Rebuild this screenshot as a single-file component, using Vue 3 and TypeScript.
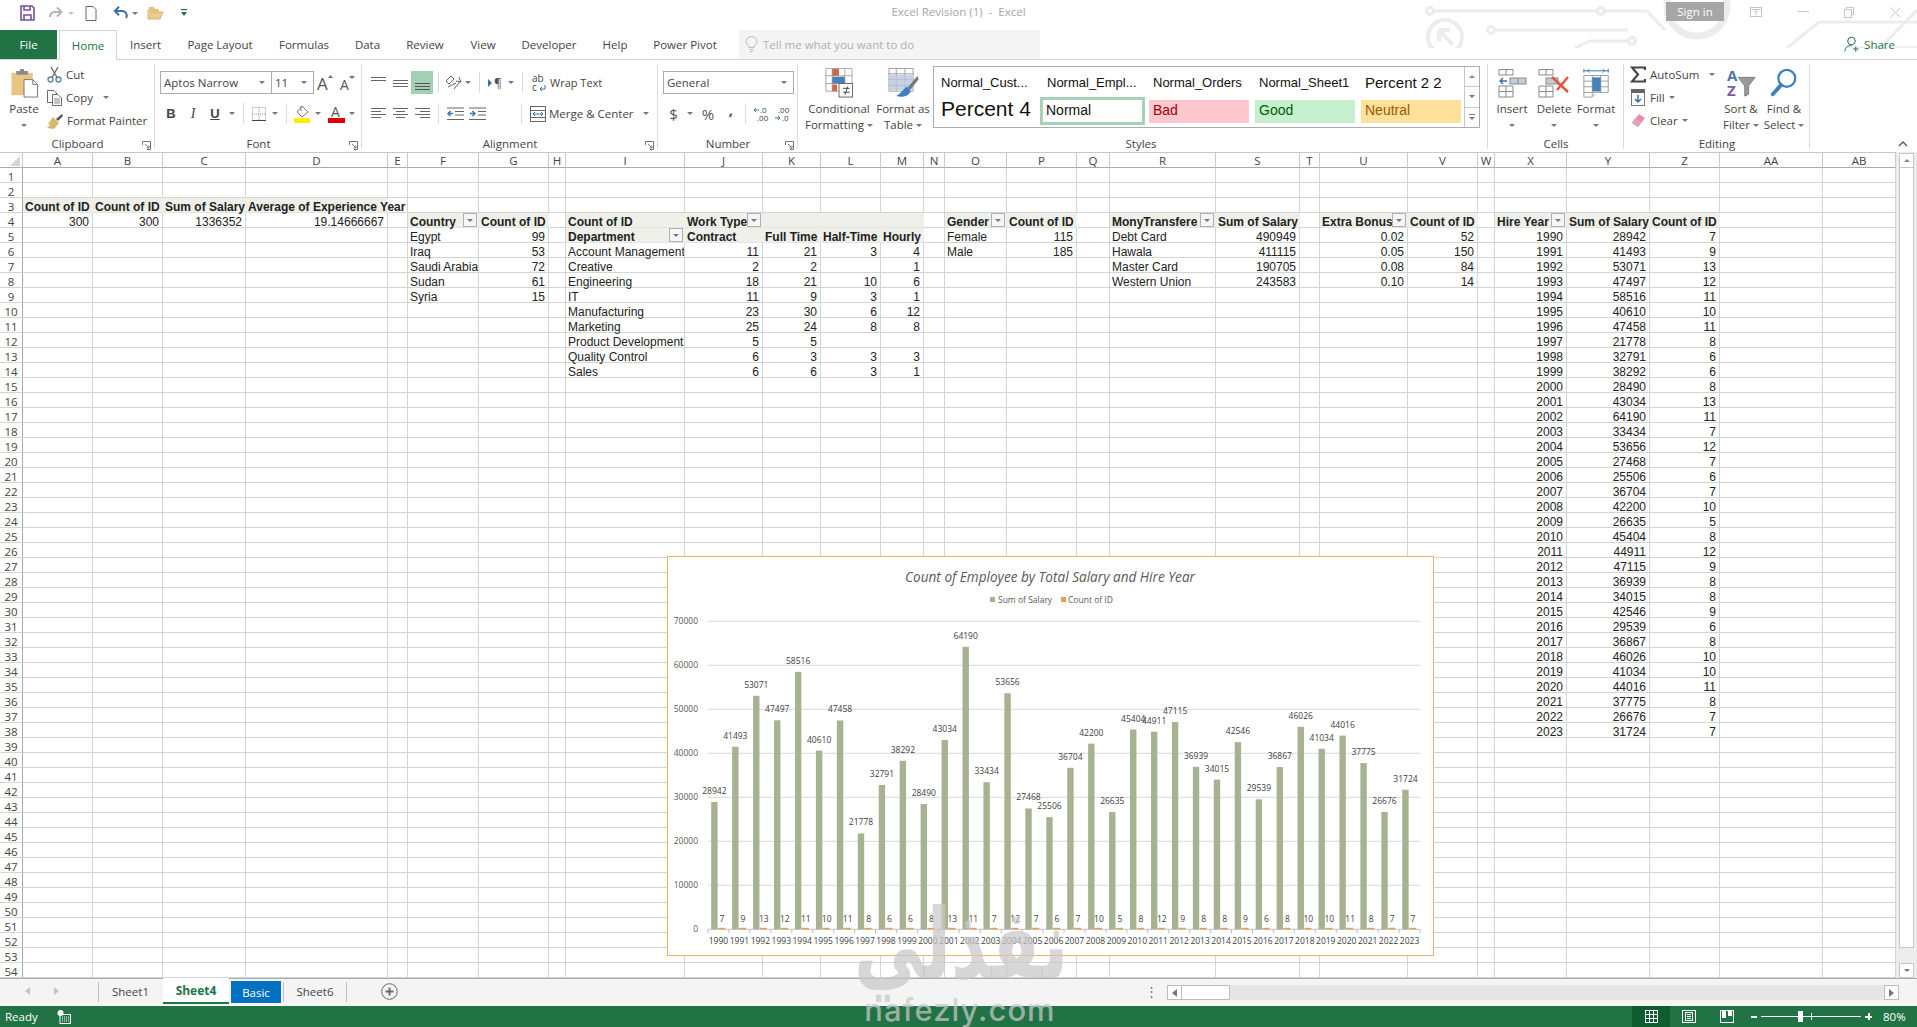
<script setup lang="ts">
type Cell = { t: string; c: string; f?: boolean }

const letters = ['A','B','C','D','E','F','G','H','I','J','K','L','M','N','O','P','Q','R','S','T','U','V','W','X','Y','Z','AA','AB']
const rows = Array.from({ length: 54 }, (_, i) => i + 1)
const store: Record<string, Cell> = {}
const put = (col: string, row: number, t: string, c = '', f = false) => { store[col + row] = { t, c, f } }

const hdr = (col: string, row: number, t: string, f = false) => put(col, row, t, 'hd fill', f)
hdr('A', 3, 'Count of ID'); hdr('B', 3, 'Count of ID'); hdr('C', 3, 'Sum of Salary')
put('D', 3, 'Average of Experience Year', 'hd fill over')
put('A', 4, '300', 'n'); put('B', 4, '300', 'n'); put('C', 4, '1336352', 'n'); put('D', 4, '19.14666667', 'n')

hdr('F', 4, 'Country', true); hdr('G', 4, 'Count of ID')
;[['Egypt', 99], ['Iraq', 53], ['Saudi Arabia', 72], ['Sudan', 61], ['Syria', 15]].forEach((r, i) => {
  put('F', 5 + i, String(r[0])); put('G', 5 + i, String(r[1]), 'n')
})

hdr('I', 4, 'Count of ID'); hdr('J', 4, 'Work Type', true); hdr('K', 4, ''); hdr('L', 4, ''); hdr('M', 4, '')
hdr('I', 5, 'Department', true); hdr('J', 5, 'Contract'); hdr('K', 5, 'Full Time'); hdr('L', 5, 'Half-Time'); hdr('M', 5, 'Hourly')
const dept: [string, string, string, string, string][] = [
  ['Account Management', '11', '21', '3', '4'], ['Creative', '2', '2', '', '1'], ['Engineering', '18', '21', '10', '6'],
  ['IT', '11', '9', '3', '1'], ['Manufacturing', '23', '30', '6', '12'], ['Marketing', '25', '24', '8', '8'],
  ['Product Development', '5', '5', '', ''], ['Quality Control', '6', '3', '3', '3'], ['Sales', '6', '6', '3', '1']
]
dept.forEach((r, i) => {
  put('I', 6 + i, r[0]); put('J', 6 + i, r[1], 'n'); put('K', 6 + i, r[2], 'n'); put('L', 6 + i, r[3], 'n'); put('M', 6 + i, r[4], 'n')
})

hdr('O', 4, 'Gender', true); hdr('P', 4, 'Count of ID')
put('O', 5, 'Female'); put('P', 5, '115', 'n'); put('O', 6, 'Male'); put('P', 6, '185', 'n')

hdr('R', 4, 'MonyTransfere', true); hdr('S', 4, 'Sum of Salary')
;[['Debt Card', '490949'], ['Hawala', '411115'], ['Master Card', '190705'], ['Western Union', '243583']].forEach((r, i) => {
  put('R', 5 + i, r[0]); put('S', 5 + i, r[1], 'n')
})

hdr('U', 4, 'Extra Bonus', true); hdr('V', 4, 'Count of ID')
;[['0.02', '52'], ['0.05', '150'], ['0.08', '84'], ['0.10', '14']].forEach((r, i) => {
  put('U', 5 + i, r[0], 'n'); put('V', 5 + i, r[1], 'n')
})

const years: [number, number][] = [
  [28942,7],[41493,9],[53071,13],[47497,12],[58516,11],[40610,10],[47458,11],[21778,8],[32791,6],[38292,6],
  [28490,8],[43034,13],[64190,11],[33434,7],[53656,12],[27468,7],[25506,6],[36704,7],[42200,10],[26635,5],
  [45404,8],[44911,12],[47115,9],[36939,8],[34015,8],[42546,9],[29539,6],[36867,8],[46026,10],[41034,10],
  [44016,11],[37775,8],[26676,7],[31724,7]
]
hdr('X', 4, 'Hire Year', true); hdr('Y', 4, 'Sum of Salary'); hdr('Z', 4, 'Count of ID')
years.forEach((r, i) => {
  put('X', 5 + i, String(1990 + i), 'n'); put('Y', 5 + i, String(r[0]), 'n'); put('Z', 5 + i, String(r[1]), 'n')
})

const cell = (col: string, row: number): Cell => store[col + row] || { t: '', c: '' }

const x0 = 40, y0 = 372.3, step = 712 / 34, perK = 44 / 10000
const ticks = [0, 1, 2, 3, 4, 5, 6, 7].map(i => ({ v: i * 10000, y: y0 - i * 44 }))
const bars = years.map((r, i) => {
  const x = x0 + i * step + 3.2
  const h = r[0] * perK
  return { i, x, y: y0 - h, h, v: r[0], c: r[1], cx: x + 3.2, ox: x + 6.9, lx: x + 10.8, year: 1990 + i, mid: x0 + i * step + step / 2, tick: x0 + i * step }
})
</script>

<template>
  <div class="app">
    <svg class="circuit" width="492" height="48" viewBox="0 0 492 48" fill="none" stroke="#ececec" stroke-width="3">
      <circle cx="5" cy="11" r="3.5" /><path d="M9 11H172" /><circle cx="176" cy="11" r="3.5" />
      <path d="M180 11H222L240 30" />
      <circle cx="20" cy="37" r="17" stroke-width="4" /><path d="M28 45L14 30M14 30V41M14 30H25" stroke-width="4" />
      <circle cx="66" cy="30" r="3.5" /><path d="M70 30H203" /><circle cx="207" cy="41" r="3.5" />
      <path d="M203 41H165L150 48" />
      <circle cx="272" cy="6" r="30" stroke-width="7" />
      <path d="M362 48L394 22H492" /><path d="M455 48L492 10" /><path d="M420 48H492" />
    </svg>

    <header class="titlebar">
      <div class="qat">
        <svg class="q1" width="15" height="16" viewBox="0 0 15 16" fill="none" stroke="#7a4f9f" stroke-width="1.6"><path d="M1 1H12L14 3V15H1Z" /><path d="M4 1V5H10V1M4 15V10H11V15" /></svg>
        <svg class="q2" width="16" height="14" viewBox="0 0 16 14" fill="none" stroke="#b5b5b5" stroke-width="2"><path d="M14 6H7A4.5 4.5 0 0 0 3 11" /><path d="M10 1.5L14.500 6L10 10.500" /></svg>
        <span class="car lt q3"></span>
        <svg class="q4" width="12" height="15" viewBox="0 0 12 15" fill="#fff" stroke="#666"><path d="M1 .5H8L11 3.500V14.500H1Z" /></svg>
        <svg class="q5" width="16" height="14" viewBox="0 0 16 14" fill="none" stroke="#3b6fa8" stroke-width="2"><path d="M2 5H9A4.500 4.500 0 0 1 13 12" /><path d="M6 .8L1.800 5L6 9.200" /></svg>
        <span class="car q6"></span>
        <svg class="q7" width="17" height="14" viewBox="0 0 17 14"><path d="M1 3V13H13L16 6H5L2 13" fill="#eccb8f" stroke="#d9b36d" /><path d="M2 3V1H7L8 3H12V6H4L2 12Z" fill="#e7c07c" /></svg>
        <svg class="q8" width="8" height="9" viewBox="0 0 8 9" fill="#217346"><rect x="1" y="0" width="6" height="1.200" /><path d="M1 3H7L4 7Z" /></svg>
      </div>
      <div class="doc-title">Excel Revision (1)&nbsp; -&nbsp; Excel</div>
      <div class="win">
        <span class="signin">Sign in</span>
        <svg class="w1" width="12" height="10" viewBox="0 0 12 10" fill="none" stroke="#c6c6c6"><rect x=".5" y=".5" width="11" height="9" /><path d="M.5 2.500H11.500M6 8.500V4M4 5.500L6 3.500L8 5.500" /></svg>
        <svg class="w2" width="11" height="2" viewBox="0 0 11 2"><rect width="11" height="1" fill="#c6c6c6" /></svg>
        <svg class="w3" width="10" height="11" viewBox="0 0 10 11" fill="#fff" stroke="#c6c6c6"><path d="M2.500 2.500V.5H9.500V7.500H7.500" /><rect x=".5" y="2.500" width="7" height="8" /></svg>
        <svg class="w4" width="11" height="11" viewBox="0 0 11 11" stroke="#c6c6c6" fill="none"><path d="M.5 .5L10.500 10.500M10.500 .5L.5 10.500" /></svg>
      </div>
    </header>

    <nav class="tabs">
      <div class="tab file">File</div>
      <div class="tab home">Home</div>
      <div class="tab">Insert</div>
      <div class="tab">Page Layout</div>
      <div class="tab">Formulas</div>
      <div class="tab">Data</div>
      <div class="tab">Review</div>
      <div class="tab">View</div>
      <div class="tab">Developer</div>
      <div class="tab">Help</div>
      <div class="tab">Power Pivot</div>
      <div class="tell">
        <svg width="13" height="17" viewBox="0 0 13 17" fill="none" stroke="#bdbdbd"><path d="M4 11.500C4 9 1 8.500 1 5.500A5.500 5 0 0 1 12 5.500C12 8.500 9 9 9 11.500ZM4.500 13.500H8.500M5 15.500H8" /></svg>
        <span>Tell me what you want to do</span>
      </div>
      <div class="share">
        <svg width="15" height="17" viewBox="0 0 15 17" fill="none" stroke="#217346"><circle cx="7.500" cy="5" r="3.800" /><path d="M.8 15.500C1.500 11 4 9.500 7.500 9.500M9 13H14.500M11.800 10.500V15.800" /></svg>
        <span>Share</span>
      </div>
    </nav>

    <section class="ribbon">
      <!-- Clipboard -->
      <div class="group g-clip">
        <div class="body flex-row">
          <div class="big paste">
            <svg width="31" height="31" viewBox="0 0 31 31"><path d="M2 5H24V28H2Z" fill="#e8c582" /><path d="M7 3H11V1H15V3H19V7H7Z" fill="#8a8a8a" /><path d="M15 12H24L29 17V30H15Z" fill="#fff" stroke="#777" /><path d="M24 12V17H29" fill="none" stroke="#777" /></svg>
            <span class="bl">Paste</span>
            <span class="bl"><i class="car"></i></span>
          </div>
          <div class="smalls s-clip">
            <div class="srow"><svg width="15" height="17" viewBox="0 0 15 17" fill="none" stroke="#5e7f9f" stroke-width="1.300"><circle cx="3.500" cy="13.500" r="2.500" /><circle cx="11.500" cy="13.500" r="2.500" /><path d="M5 11.500L11 1M10 11.500L4 1" stroke="#666" /></svg><span>Cut</span></div>
            <div class="srow"><svg width="15" height="16" viewBox="0 0 15 16" fill="#fff" stroke="#6b6b6b"><path d="M.5 .5H7L9.500 3V12.500H.5Z" /><path d="M5.500 4.500H11L14.500 8V15.500H5.500Z" /><path d="M7 9H13M7 11H13M7 13H13" stroke="#8a8a8a" /></svg><span>Copy</span><i class="car copy-car"></i></div>
            <div class="srow"><svg width="16" height="16" viewBox="0 0 16 16"><path d="M9 6L15 1L16 3L11 8Z" fill="#555" /><path d="M6 4L12 10L7 16L0 15L3 12L1 11Z" fill="#d9b56e" /></svg><span>Format Painter</span></div>
          </div>
        </div>
        <div class="glabel">Clipboard<svg class="launch" width="9" height="9" viewBox="0 0 9 9" fill="none" stroke="#777"><path d="M.5 4V.5H8.500V8.500H5M3 3L7 7M7 4.500V7H4.500" /></svg></div>
      </div>

      <!-- Font -->
      <div class="group g-font">
        <div class="body rows2">
          <div class="row">
            <div class="combo font-name"><span>Aptos Narrow</span><i class="car"></i></div>
            <div class="combo font-size"><span>11</span><i class="car"></i></div>
            <div class="b w22 grow-a"><svg width="18" height="18" viewBox="0 0 18 18"><text x="0" y="16" class="glyph-a">A</text><path d="M11 4L13.500 1L16 4Z" fill="#4b78aa" /></svg></div>
            <div class="b w22"><svg width="16" height="16" viewBox="0 0 16 16"><text x="0" y="15" class="glyph-a2">A</text><path d="M9 1H15L12 4Z" fill="#4b78aa" /></svg></div>
          </div>
          <div class="row r-font2">
            <div class="b w22 tb">B</div>
            <div class="b w22 ti">I</div>
            <div class="b w22 tu">U</div>
            <div class="b w12"><i class="car"></i></div>
            <div class="sep"></div>
            <div class="b w20"><svg width="14" height="14" viewBox="0 0 14 14" fill="none" stroke="#9a9a9a" stroke-dasharray="1 1"><rect x=".5" y=".5" width="13" height="13" /><path d="M7 0V14M0 7H14" /><path d="M0 13.500H14" stroke="#444" stroke-dasharray="none" /></svg></div>
            <div class="b w12"><i class="car"></i></div>
            <div class="sep"></div>
            <div class="b w20"><svg width="17" height="18" viewBox="0 0 17 18"><path d="M8 1L14 7L8 12L3 7Z" fill="#fff" stroke="#777" /><path d="M7 1V6" stroke="#777" /><rect x="0" y="13" width="16" height="5" fill="#ffee00" /></svg></div>
            <div class="b w12"><i class="car"></i></div>
            <div class="sep sp0"></div>
            <div class="b w20"><svg width="17" height="18" viewBox="0 0 17 18"><text x="3" y="12" class="glyph-c">A</text><rect x="0" y="13" width="17" height="5" fill="#e00000" /></svg></div>
            <div class="b w12"><i class="car"></i></div>
          </div>
        </div>
        <div class="glabel">Font<svg class="launch" width="9" height="9" viewBox="0 0 9 9" fill="none" stroke="#777"><path d="M.5 4V.5H8.500V8.500H5M3 3L7 7M7 4.500V7H4.500" /></svg></div>
      </div>

      <!-- Alignment -->
      <div class="group g-align">
        <div class="body rows2">
          <div class="row">
            <div class="b w22"><svg width="15" height="16" viewBox="0 0 15 16" stroke="#666"><path d="M0 2.500H15M0 5.500H15" /></svg></div>
            <div class="b w22"><svg width="15" height="16" viewBox="0 0 15 16" stroke="#666"><path d="M0 5.500H15M0 8.500H15M0 11.500H15" /></svg></div>
            <div class="b w22 on"><svg width="15" height="16" viewBox="0 0 15 16" stroke="#555"><path d="M0 8.500H15M0 11.500H15M0 14.500H15" /></svg></div>
            <div class="sep"></div>
            <div class="b w18"><svg width="17" height="17" viewBox="0 0 17 17" fill="none" stroke="#666"><path d="M1 7L6 2L9 5L4 10ZM3 13L11 9M14 3L16 8L11 7M15.500 7L9 15" /></svg></div>
            <div class="b w12"><i class="car"></i></div>
            <div class="sep"></div>
            <div class="b w20"><svg width="14" height="12" viewBox="0 0 14 12"><path d="M0 2L4 6L0 10Z" fill="#3b6fa8" /><text x="6" y="11" class="glyph-p">¶</text></svg></div>
            <div class="b w12"><i class="car"></i></div>
            <div class="sep s4"></div>
            <div class="b w22"><svg width="15" height="18" viewBox="0 0 15 18"><text x="0" y="8" class="glyph-w">ab</text><text x="0" y="17" class="glyph-w">c</text><path d="M13 11V15H8M10 13L8 15L10 17" fill="none" stroke="#3b6fa8" /></svg></div>
            <span class="rtext wrap">Wrap Text</span>
          </div>
          <div class="row">
            <div class="b w22"><svg width="15" height="14" viewBox="0 0 15 14" stroke="#666"><path d="M0 1.500H15M0 4.500H10M0 7.500H15M0 10.500H10" /></svg></div>
            <div class="b w22"><svg width="15" height="14" viewBox="0 0 15 14" stroke="#666"><path d="M0 1.500H15M3 4.500H12M0 7.500H15M3 10.500H12" /></svg></div>
            <div class="b w22"><svg width="15" height="14" viewBox="0 0 15 14" stroke="#666"><path d="M0 1.500H15M5 4.500H15M0 7.500H15M5 10.500H15" /></svg></div>
            <div class="sep"></div>
            <div class="b w22"><svg width="17" height="14" viewBox="0 0 17 14" fill="none"><path d="M0 1H17M8 4.500H17M8 8H17M0 12.500H17" stroke="#666" /><path d="M6 6.500H1M3.500 4L1 6.500L3.500 9" stroke="#3b6fa8" stroke-width="1.400" /></svg></div>
            <div class="b w22"><svg width="17" height="14" viewBox="0 0 17 14" fill="none"><path d="M0 1H17M9 4.500H17M9 8H17M0 12.500H17" stroke="#666" /><path d="M1 6.500H6M3.500 4L6 6.500L3.500 9" stroke="#3b6fa8" stroke-width="1.400" /></svg></div>
            <div class="spacer31"></div>
            <div class="sep"></div>
            <div class="b w22"><svg width="16" height="16" viewBox="0 0 16 16" fill="none" stroke="#666"><rect x=".5" y=".5" width="15" height="15" /><path d="M0 4.500H16M0 11.500H16" /><path d="M3 8H13M5 6L3 8L5 10M11 6L13 8L11 10" stroke="#3b6fa8" /></svg></div>
            <span class="rtext merge">Merge &amp; Center</span>
            <i class="car"></i>
          </div>
        </div>
        <div class="glabel">Alignment<svg class="launch" width="9" height="9" viewBox="0 0 9 9" fill="none" stroke="#777"><path d="M.5 4V.5H8.500V8.500H5M3 3L7 7M7 4.500V7H4.500" /></svg></div>
      </div>

      <!-- Number -->
      <div class="group g-num">
        <div class="body rows2">
          <div class="row"><div class="combo num-combo"><span>General</span><i class="car"></i></div></div>
          <div class="row">
            <div class="b w21 tn">$</div>
            <div class="b w12"><i class="car"></i></div>
            <div class="b w24 tn">%</div>
            <div class="b w18 tn tc">,</div>
            <div class="sep"></div>
            <div class="b w20"><svg width="15" height="16" viewBox="0 0 15 16"><path d="M5 4H0M2 2L0 4L2 6" stroke="#3b6fa8" fill="none" /><text x="6" y="7" class="glyph-n">.0</text><text x="3" y="15" class="glyph-n">.00</text></svg></div>
            <div class="b w22"><svg width="15" height="16" viewBox="0 0 15 16"><text x="3" y="7" class="glyph-n">.00</text><path d="M0 12H5M3 10L5 12L3 14" stroke="#3b6fa8" fill="none" /><text x="7" y="15" class="glyph-n">.0</text></svg></div>
          </div>
        </div>
        <div class="glabel">Number<svg class="launch" width="9" height="9" viewBox="0 0 9 9" fill="none" stroke="#777"><path d="M.5 4V.5H8.500V8.500H5M3 3L7 7M7 4.500V7H4.500" /></svg></div>
      </div>

      <!-- Styles -->
      <div class="group g-styles">
        <div class="body flex-row">
          <div class="big cf">
            <svg width="29" height="31" viewBox="0 0 29 31" fill="none"><path d="M.5 .5H27.500V24H.5ZM7 0V24M20 0V24M0 8H28M0 16H28" stroke="#a8a8a8" /><rect x="7" y="1" width="7" height="7" fill="#c96a4c" /><rect x="7" y="9" width="13" height="7" fill="#4a80b8" /><rect x="7" y="17" width="5" height="7" fill="#c96a4c" /><rect x="14" y="16" width="14" height="14" fill="#fff" stroke="#666" /><path d="M18 21H25M18 25H25M23 19L20 28" stroke="#444" /></svg>
            <span class="bl">Conditional</span>
            <span class="bl">Formatting<i class="car mini"></i></span>
          </div>
          <div class="big fat">
            <svg width="31" height="31" viewBox="0 0 31 31" fill="none"><path d="M.5 .5H25.500V24H.5ZM8 0V24M17 0V24M0 6H26M0 12H26M0 18H26" stroke="#a0a0a0" /><rect x="1" y="7" width="24" height="16" fill="#b9c7dd" opacity=".8" /><path d="M30 8L20 20L22 23L31 12Z" fill="#777" /><path d="M19 19C15 22 14 25 8 29C14 31 21 29 23 24Z" fill="#3f7fc1" /></svg>
            <span class="bl">Format as</span>
            <span class="bl">Table<i class="car mini"></i></span>
          </div>
          <div class="gallery">
            <div class="gal-grid">
              <div class="gi">Normal_Cust...</div>
              <div class="gi">Normal_Empl...</div>
              <div class="gi">Normal_Orders</div>
              <div class="gi">Normal_Sheet1</div>
              <div class="gi pct22">Percent 2 2</div>
              <div class="gi pct4">Percent 4</div>
              <div class="gbox normal">Normal</div>
              <div class="gbox bad">Bad</div>
              <div class="gbox good">Good</div>
              <div class="gbox neutral">Neutral</div>
            </div>
            <div class="gal-scroll">
              <div class="gs"><i class="car up lt"></i></div>
              <div class="gs"><i class="car"></i></div>
              <div class="gs more"><span></span><i class="car"></i></div>
            </div>
          </div>
        </div>
        <div class="glabel lbl-styles">Styles</div>
      </div>

      <!-- Cells -->
      <div class="group g-cells">
        <div class="body flex-row">
          <div class="big cb">
            <svg width="29" height="30" viewBox="0 0 29 30" fill="none" stroke="#8a8a8a"><path d="M1 1.500H15V7H1ZM8 1.500V7M1 18H15V29H1ZM8 18V29M1 23.500H15" /><rect x="12" y="10" width="16" height="6" fill="#c3cdd9" /><path d="M20 10V16" /><path d="M9 13H2M5 10L2 13L5 16" stroke="#3b6fa8" stroke-width="1.400" /></svg>
            <span class="bl">Insert</span>
            <span class="bl"><i class="car"></i></span>
          </div>
          <div class="big cb">
            <svg width="32" height="30" viewBox="0 0 32 30" fill="none" stroke="#8a8a8a"><path d="M1 1.500H15V7H1ZM8 1.500V7M1 18H15V29H1ZM8 18V29M1 23.500H15" /><rect x="8" y="10" width="12" height="6" fill="#c3cdd9" /><path d="M14 9L30 24M30 9L19 22" stroke="#e0553b" stroke-width="2.400" /></svg>
            <span class="bl">Delete</span>
            <span class="bl"><i class="car"></i></span>
          </div>
          <div class="big cb">
            <svg width="29" height="32" viewBox="0 0 29 32" fill="none" stroke="#9a9a9a"><path d="M1 3H27M1 1V5M27 1V5M5 3L7 1M5 3L7 5M23 3L21 1M23 3L21 5" stroke="#3b6fa8" /><path d="M1 8H27V26H1ZM10 8V30M19 8V26M1 14H27M1 20H27" /><rect x="10" y="10" width="9" height="15" fill="#4a80b8" stroke="none" /><path d="M1 26V31H10L13 28" /></svg>
            <span class="bl">Format</span>
            <span class="bl"><i class="car"></i></span>
          </div>
        </div>
        <div class="glabel">Cells</div>
      </div>

      <!-- Editing -->
      <div class="group g-edit">
        <div class="body flex-row">
          <div class="smalls s-edit">
            <div class="srow"><svg width="16" height="17" viewBox="0 0 16 17" fill="none" stroke="#444" stroke-width="2.200"><path d="M15 4V1.500H2L8 8.500L2 15.500H15V13" /></svg><span>AutoSum</span><i class="car auto-car"></i></div>
            <div class="srow"><svg width="14" height="17" viewBox="0 0 14 17" fill="#fff" stroke="#777"><rect x=".5" y=".5" width="13" height="16" /><rect x="0" y="0" width="14" height="4" fill="#666" stroke="none" /><path d="M7 6V13M4 10L7 13L10 10" stroke="#3b6fa8" stroke-width="1.500" fill="none" /></svg><span>Fill</span><i class="car fill-car"></i></div>
            <div class="srow"><svg width="14" height="15" viewBox="0 0 14 15"><path d="M8 1L14 5L7 14L1 10Z" fill="#e88ea8" /><path d="M1 10L4 5L10 9L7 14Z" fill="#e4a0b4" /></svg><span>Clear</span><i class="car fill-car"></i></div>
          </div>
          <div class="big sf">
            <svg width="31" height="32" viewBox="0 0 31 32"><text x="0" y="14" class="az a">A</text><text x="0" y="30" class="az z">Z</text><path d="M12 10H30L23 19V28L19 30V19Z" fill="#9a9a9a" stroke="#777" /></svg>
            <span class="bl">Sort &amp;</span>
            <span class="bl">Filter<i class="car mini"></i></span>
          </div>
          <div class="big fs">
            <svg width="28" height="32" viewBox="0 0 28 32" fill="none" stroke="#3f7fc1"><circle cx="17" cy="11" r="9" stroke-width="2.400" /><path d="M11 18L2 28" stroke-width="4" stroke-linecap="round" /></svg>
            <span class="bl">Find &amp;</span>
            <span class="bl">Select<i class="car mini"></i></span>
          </div>
        </div>
        <div class="glabel">Editing</div>
      </div>

      <div class="collapse-wrap">
        <svg width="10" height="7" viewBox="0 0 10 7" fill="none" stroke="#555" stroke-width="1.400"><path d="M1 6L5 2L9 6" /></svg>
      </div>
    </section>

    <main class="sheet">
      <div class="grid">
        <div class="corner"><svg width="10" height="10" viewBox="0 0 10 10"><path d="M10 0V10H0Z" fill="#d4d4d4" /></svg></div>
        <div v-for="l in letters" :key="l" class="colh">{{ l }}</div>
        <template v-for="r in rows" :key="r">
          <div class="rowh">{{ r }}</div>
          <div v-for="l in letters" :key="l" class="cell" :class="cell(l, r).c">
            <span class="ct">{{ cell(l, r).t }}</span>
            <span v-if="cell(l, r).f" class="flt"><i class="car dk"></i></span>
          </div>
        </template>

        <div class="chart">
          <svg width="765" height="398" viewBox="0 0 765 398">
            <text x="382" y="25" text-anchor="middle" class="ch-title">Count of Employee by Total Salary and Hire Year</text>
            <rect x="322" y="40" width="5" height="5" fill="#a7b293" />
            <text x="330" y="46" class="ch-leg">Sum of Salary</text>
            <rect x="393" y="40" width="5" height="5" fill="#e3a04f" />
            <text x="400" y="46" class="ch-leg">Count of ID</text>
            <g v-for="t in ticks" :key="t.v">
              <line v-if="t.v" :x1="x0" :x2="752" :y1="t.y" :y2="t.y" stroke="#d9d9d9" />
              <text x="30" :y="t.y + 3" text-anchor="end" class="ch-lab">{{ t.v }}</text>
            </g>
            <line :x1="x0" x2="752" :y1="y0" :y2="y0" stroke="#bfbfbf" />
            <g v-for="b in bars" :key="b.i">
              <line :x1="b.tick" :x2="b.tick" :y1="y0" :y2="y0 + 4" stroke="#bfbfbf" />
              <rect :x="b.x" :y="b.y" width="6.400" :height="b.h" fill="#a7b293" />
              <rect :x="b.ox" :y="y0 - 1.500" width="7" height="1.500" fill="#e3a04f" />
              <text :x="b.cx" :y="b.y - 8" text-anchor="middle" class="ch-val">{{ b.v }}</text>
              <text :x="b.lx" :y="y0 - 7" text-anchor="middle" class="ch-val">{{ b.c }}</text>
              <text :x="b.mid" :y="y0 + 15" text-anchor="middle" class="ch-val">{{ b.year }}</text>
            </g>
            <line x1="752" x2="752" :y1="y0" :y2="y0 + 4" stroke="#bfbfbf" />
          </svg>
        </div>
      </div>
      <div class="vscroll">
        <div class="vbtn"><i class="car up lt"></i></div>
        <div class="vthumb"></div>
        <div class="vbtn down"><i class="car"></i></div>
      </div>
    </main>

    <div class="sheetbar">
      <div class="nav"><i class="tri-l"></i><i class="tri-r"></i></div>
      <div class="stab first">Sheet1</div>
      <div class="stab active">Sheet4</div>
      <div class="stab blue">Basic</div>
      <div class="stab last">Sheet6</div>
      <svg class="plus" width="17" height="17" viewBox="0 0 17 17" fill="none" stroke="#666"><circle cx="8.500" cy="8.500" r="7.800" /><path d="M8.500 4.500V12.500M4.500 8.500H12.500" stroke-width="1.800" /></svg>
      <div class="dots">⋮</div>
      <div class="hscroll">
        <div class="hbtn"><i class="tri-l dk2"></i></div>
        <div class="hthumb"></div>
        <div class="htrack"></div>
        <div class="hbtn"><i class="tri-r dk2"></i></div>
      </div>
    </div>

    <footer class="status">
      <span class="ready">Ready</span>
      <svg class="macro" width="14" height="14" viewBox="0 0 14 14" fill="none" stroke="#fff"><rect x="3" y="4.500" width="10.500" height="9" /><path d="M5 7H12M5 9H12M5 11H12" stroke-dasharray="1 1" /><circle cx="3.500" cy="3" r="3" fill="#fff" stroke="none" /></svg>
      <div class="views">
        <div class="view cur"><svg width="13" height="13" viewBox="0 0 13 13" fill="none" stroke="#fff"><rect x=".5" y=".5" width="12" height="12" /><path d="M4.500 0V13M8.500 0V13M0 4.500H13M0 8.500H13" /></svg></div>
        <div class="view"><svg width="14" height="13" viewBox="0 0 14 13" fill="none" stroke="#fff"><rect x=".5" y=".5" width="13" height="12" /><rect x="3.500" y="2.500" width="7" height="8" /><path d="M5 4.500H9M5 6.500H9M5 8.500H9" /></svg></div>
        <div class="view"><svg width="14" height="13" viewBox="0 0 14 13" fill="none" stroke="#fff"><rect x=".5" y=".5" width="13" height="12" /><path d="M2 1H6V8H2ZM8 1H12V6H8Z" fill="#fff" stroke="none" /></svg></div>
      </div>
      <div class="zoom">
        <span class="z-minus"></span>
        <div class="z-track"><span class="z-tick"></span><span class="z-thumb"></span></div>
        <span class="z-plus"></span>
        <span class="z-val">80%</span>
      </div>
    </footer>

    <div class="watermark">
      <div class="wm-ar">نفذلي</div>
      <div class="wm-en">nafezly.com</div>
    </div>
  </div>
</template>

<style>
html, body { margin: 0; padding: 0; background: #fff; overflow: hidden; }
</style>

<style scoped>
.app { position: relative; width: 1917px; height: 1027px; display: flex; flex-direction: column; overflow: hidden; background: #fff; font-family: "Open Sans", "Noto Sans", sans-serif; font-size: 11px; color: #444; }
.circuit { position: absolute; right: 0; top: 0; }
i { display: inline-block; }
.car { display: inline-block; width: 0; height: 0; border-left: 3px solid transparent; border-right: 3px solid transparent; border-top: 3px solid #777; flex: none; }
.car.lt { border-top-color: #c4c4c4; }
.car.dk { border-top-color: #777; }
.car.up { border-top: 0; border-bottom: 3px solid #888; }
.car.mini { margin-left: 3px; vertical-align: 2px; }

.titlebar { position: relative; height: 30px; flex: none; display: grid; grid-template-columns: 1fr auto 1fr; align-items: center; }
.qat { display: flex; align-items: center; padding: 0 0 4px 20px; }
.q2 { margin-left: 12px; } .q3 { margin-left: 5px; } .q4 { margin-left: 11px; } .q5 { margin-left: 16px; }
.q6 { margin-left: 3px; } .q7 { margin-left: 9px; } .q8 { margin-left: 16px; }
.doc-title { color: #a6a6a6; font-size: 11.500px; padding-bottom: 7px; }
.win { display: flex; align-items: center; justify-content: flex-end; height: 30px; }
.signin { width: 58px; height: 19px; margin-top: -7px; margin-right: 0; background: #a6a6a6; color: #fff; text-align: center; line-height: 19px; font-size: 11.500px; }
.win svg { margin-top: -6px; }
.w1 { margin-left: 26px; } .w2 { margin-left: 36px; } .w3 { margin-left: 35px; } .w4 { margin-left: 36px; margin-right: 16px; }

.tabs { position: relative; height: 30px; flex: none; display: grid; grid-template-columns: 57px 60px 57px 92px 76px 51px 64px 52px 80px 52px 88px 10px 301px 1fr; box-sizing: border-box; border-bottom: 1px solid #d4d4d4; }
.tab { display: flex; align-items: center; justify-content: center; font-size: 11.500px; color: #444; height: 29px; }
.tab.file { background: #217346; color: #fff; }
.tab.home { color: #217346; background: #fff; border: 1px solid #d4d4d4; border-bottom: 0; height: 30px; margin: 0 0 -1px 2px; box-sizing: border-box; width: 58px; position: relative; }
.tell { grid-column: 13; display: flex; align-items: center; gap: 5px; padding-left: 6px; background: #f4f4f4; color: #b0b0b0; font-size: 11.500px; height: 29px; }
.share { grid-column: 14; display: flex; align-items: center; justify-content: flex-end; gap: 5px; color: #217346; font-size: 11.500px; padding-right: 22px; }

.ribbon { height: 92px; flex: none; display: flex; }
.group { position: relative; flex: none; display: flex; flex-direction: column; box-sizing: border-box; }
.group::after { content: ""; position: absolute; right: 0; top: 4px; bottom: 3px; width: 1px; background: #dcdcdc; }
.body { height: 76px; box-sizing: border-box; }
.glabel { position: relative; height: 16px; line-height: 16px; text-align: center; color: #444; font-size: 11.500px; }
.launch { position: absolute; right: 4px; top: 5px; }
.flex-row { display: flex; }
.g-clip { width: 155px; } .g-font { width: 207px; } .g-align { width: 296px; } .g-num { width: 140px; }
.g-styles { width: 690px; } .g-cells { width: 136px; } .g-edit { width: 186px; }
.lbl-styles { padding-right: 4px; }

.big { display: flex; flex-direction: column; align-items: center; padding-top: 8px; box-sizing: border-box; flex: none; }
.big > svg { height: 30px; margin-bottom: 3px; overflow: visible; }
.bl { height: 16px; line-height: 16px; white-space: nowrap; font-size: 11.500px; color: #444; display: flex; align-items: center; justify-content: center; }
.paste { width: 36px; margin-left: 6px; }
.smalls { padding-top: 3px; }
.srow { display: flex; align-items: center; height: 23px; white-space: nowrap; font-size: 11.500px; }
.srow svg { flex: none; }
.s-clip { margin-left: 5px; }
.s-clip .srow span { margin-left: 4px; }
.copy-car { margin-left: 10px; }
.s-edit { width: 94px; padding-left: 6px; box-sizing: border-box; }
.s-edit .srow svg { width: 16px; }
.s-edit .srow span { margin-left: 4px; }
.auto-car { margin-left: 10px; }
.fill-car { margin-left: 4px; }

.rows2 { padding-top: 11px; display: flex; flex-direction: column; gap: 8px; }
.row { display: flex; align-items: center; height: 23px; }
.b { display: flex; align-items: center; justify-content: center; flex: none; height: 23px; }
.b svg { overflow: visible; }
.w12 { width: 12px; } .w18 { width: 18px; } .w20 { width: 20px; } .w21 { width: 21px; } .w22 { width: 22px; } .w24 { width: 24px; }
.sep { width: 1px; height: 21px; background: #dcdcdc; margin: 0 5px; flex: none; }
.sp0 { width: 0; margin: 0 1px; background: transparent; }
.on { background: #a3d0b5; }
.combo { display: flex; align-items: center; justify-content: space-between; height: 23px; box-sizing: border-box; border: 1px solid #ababab; background: #fff; padding: 0 6px 0 3px; font-size: 11.500px; color: #444; flex: none; }
.g-font .body { padding-left: 5px; }
.font-name { width: 112px; }
.font-size { width: 43px; margin-left: -1px; }
.grow-a { margin-left: 1px; }
.tb { font-family: "Liberation Sans", sans-serif; font-weight: 700; font-size: 13px; }
.ti { font-family: "Liberation Serif", serif; font-style: italic; font-size: 14px; }
.tu { font-family: "Liberation Sans", sans-serif; font-weight: 700; font-size: 13px; text-decoration: underline; }
.glyph-a { font: 17px "Open Sans", sans-serif; fill: #555; }
.glyph-a2 { font: 14px "Open Sans", sans-serif; fill: #555; }
.glyph-c { font: 14px "Open Sans", sans-serif; fill: #555; }
.glyph-p { font: 12px "Open Sans", sans-serif; fill: #555; }
.glyph-w { font: 10px "Open Sans", sans-serif; fill: #444; }
.glyph-n { font: 8px "Open Sans", sans-serif; fill: #444; }
.g-align .body { padding-left: 5px; }
.rtext { font-size: 11.500px; white-space: nowrap; }
.wrap { font-size: 11px; }
.merge { width: 92px; margin-right: 2px; }
.spacer31 { width: 28px; flex: none; }
.g-num .body { padding-left: 5px; }
.num-combo { width: 131px; }
.tn { font-size: 15px; color: #555; }
.tc { font-weight: 700; margin: -10px 0 0 2px; }
.cf { width: 74px; margin-left: 4px; } .fat { width: 54px; }
.gallery { flex: none; display: flex; width: 547px; height: 62px; margin: 6px 0 0 3px; box-sizing: border-box; border: 1px solid #ababab; background: #fff; }
.gal-grid { flex: 1; display: grid; grid-template-columns: repeat(5, 106px); grid-template-rows: 30px 28px; font-family: "Liberation Sans", sans-serif; color: #111; }
.gi { font-size: 13px; padding: 8px 0 0 7px; white-space: nowrap; line-height: 15px; }
.pct22 { font-size: 15px; }
.pct4 { font-size: 21px; padding: 0 0 0 7px; line-height: 28px; margin-top: -2px; }
.gbox { font-size: 14px; height: 23px; line-height: 20px; padding-left: 4px; align-self: center; margin-left: 3px; width: 100px; box-sizing: border-box; }
.normal { height: 28px; width: 105px; margin-left: 0; border: 3px solid #a5d2b9; padding-left: 3px; color: #111; }
.bad { background: #ffc7ce; color: #9c0006; }
.good { background: #c6efce; color: #006100; margin-left: 3px; }
.neutral { background: #ffe19c; color: #9c5700; }
.gal-scroll { width: 14px; flex: none; border-left: 1px solid #c8c8c8; display: flex; flex-direction: column; }
.gs { flex: 1; display: flex; flex-direction: column; gap: 2px; align-items: center; justify-content: center; border-bottom: 1px solid #c8c8c8; }
.gs:last-child { border-bottom: 0; }
.more span { width: 6px; height: 1px; background: #777; }
.cb { width: 42px; }
.cb:first-child { margin-left: 3px; }
.sf { width: 46px; } .fs { width: 40px; }
.az { font: 700 16px "Open Sans", sans-serif; }
.az.a { fill: #4b78aa; } .az.z { fill: #7e5aa6; }
.collapse-wrap { flex: 1; display: flex; align-items: flex-end; justify-content: flex-end; padding: 0 9px 5px 0; }

.sheet { height: 826px; flex: none; display: flex; }
.grid { position: relative; display: grid; width: 1896px; height: 826px; grid-template-columns: 23px 70px 70px 83px 142px 20px 71px 70px 17px 119px 78px 58px 60px 43px 21px 62px 70px 33px 106px 84px 20px 88px 70px 17px 72px 83px 70px 103px 73px; grid-template-rows: 16px repeat(54, 15px); font-family: "Liberation Sans", Arial, sans-serif; color: #222; }
.corner, .colh, .rowh { box-sizing: border-box; font-family: "Open Sans", sans-serif; color: #444; background: #fff; }
.corner { border-top: 1px solid #c8c8c8; border-right: 1px solid #c8c8c8; border-bottom: 1px solid #ababab; display: flex; align-items: flex-end; justify-content: flex-end; padding: 0 2px 1px 0; }
.colh { border-top: 1px solid #c8c8c8; border-right: 1px solid #c8c8c8; border-bottom: 1px solid #ababab; text-align: center; line-height: 15px; font-size: 11.500px; }
.rowh { border-right: 1px solid #ababab; border-bottom: 1px solid #d4d4d4; font-size: 11.500px; line-height: 17px; text-align: center; overflow: hidden; }
.cell { position: relative; box-sizing: border-box; border-right: 1px solid #d4d4d4; border-bottom: 1px solid #d4d4d4; font-size: 12px; line-height: 19px; white-space: nowrap; overflow-x: clip; overflow-y: visible; padding: 0 2px; min-width: 0; }
.ct { display: block; }
.n { text-align: right; padding-right: 3px; }
.cell.hd { font-weight: 700; }
.cell.fill { background: #eff0ea; border-right-color: #eff0ea; border-bottom-color: #e4e5df; }
.cell.over { overflow: visible; z-index: 1; }
.flt { position: absolute; right: 1px; top: 0; width: 14px; height: 14px; box-sizing: border-box; border: 1px solid #b0b0b0; background: #f6f6f6; display: flex; align-items: center; justify-content: center; }

.chart { position: absolute; left: 668px; top: 405px; width: 765px; height: 398px; box-sizing: border-box; background: #fff; outline: 1px solid #e8b565; z-index: 2; }
.chart svg { display: block; }
.ch-title { font: italic 13.600px "Open Sans", sans-serif; fill: #595959; }
.ch-leg { font: 8.500px "Open Sans", sans-serif; fill: #595959; }
.ch-lab { font: 8.500px "Open Sans", sans-serif; fill: #595959; }
.ch-val { font: 8.500px "Open Sans", sans-serif; fill: #404040; }

.vscroll { flex: 1; display: flex; flex-direction: column; align-items: center; background: #ececec; }
.vbtn { width: 15px; height: 15px; box-sizing: border-box; border: 1px solid #c8c8c8; background: #fff; display: flex; align-items: center; justify-content: center; margin-top: 1px; }
.vbtn.down { margin-top: auto; margin-bottom: 0; }
.vthumb { width: 15px; height: 780px; box-sizing: border-box; border: 1px solid #c8c8c8; border-top: 0; background: #fff; }

.sheetbar { height: 28px; flex: none; display: flex; align-items: flex-start; background: #f4f4f4; box-sizing: border-box; box-shadow: inset 0 1px 0 #ababab; }
.nav { width: 98px; height: 26px; display: flex; align-items: center; gap: 24px; padding-left: 25px; box-sizing: border-box; }
.tri-l, .tri-r { width: 0; height: 0; border-top: 4px solid transparent; border-bottom: 4px solid transparent; }
.tri-l { border-right: 5px solid #c4c4c4; } .tri-r { border-left: 5px solid #c4c4c4; }
.tri-l.dk2 { border-right-color: #777; } .tri-r.dk2 { border-left-color: #777; }
.stab { height: 27px; display: flex; align-items: center; justify-content: center; box-sizing: border-box; font-size: 11.500px; color: #444; margin-top: 0; }
.first { width: 65px; position: relative; }
.first::before { content: ""; position: absolute; left: 0; top: 4px; height: 20px; width: 1px; background: #bdbdbd; }
.active { width: 66px; height: 26px; background: #fff; color: #217346; font-weight: 700; border-bottom: 2px solid #217346; font-size: 12px; }
.blue { width: 50px; height: 22px; margin: 3px 0 0 2px; background: #0070c0; color: #fff; }
.last { width: 64px; margin-left: 2px; position: relative; }
.last::before, .last::after { content: ""; position: absolute; top: 4px; height: 20px; width: 1px; background: #bdbdbd; }
.last::before { left: 0; } .last::after { right: 0; }
.plus { margin: 5px 0 0 34px; }
.dots { margin: 3px 0 0 747px; width: 10px; color: #777; font-size: 13px; line-height: 20px; text-align: center; }
.hscroll { display: flex; height: 15px; margin: 7px 0 0 12px; width: 732px; }
.hbtn { width: 15px; height: 15px; box-sizing: border-box; border: 1px solid #bdbdbd; background: #fff; display: flex; align-items: center; justify-content: center; flex: none; }
.hthumb { width: 48px; flex: none; box-sizing: border-box; border: 1px solid #bdbdbd; border-left: 0; background: #fff; }
.htrack { flex: 1; background: #e6e6e6; }

.status { position: relative; height: 21px; flex: none; background: #217346; color: #fff; display: flex; align-items: center; }
.ready { margin-left: 5px; font-size: 11.500px; }
.macro { margin-left: 19px; }
.views { display: flex; margin-left: auto; height: 21px; }
.view { width: 38px; display: flex; align-items: center; justify-content: center; }
.view.cur { background: #0f5c30; }
.zoom { display: flex; align-items: center; margin-left: 5px; width: 166px; }
.z-minus { width: 6px; height: 2px; background: #fff; }
.z-track { position: relative; width: 100px; height: 1px; background: #fff; margin: 0 4px; }
.z-tick { position: absolute; left: 50px; top: -3px; width: 1px; height: 7px; background: #fff; }
.z-thumb { position: absolute; left: 37px; top: -5px; width: 5px; height: 11px; background: #fff; }
.z-plus { position: relative; width: 7px; height: 2px; background: #fff; }
.z-plus::after { content: ""; position: absolute; left: 2.500px; top: -2.500px; width: 2px; height: 7px; background: #fff; }
.z-val { margin-left: 11px; font-size: 11.500px; }

.watermark { position: absolute; left: 854px; top: 900px; width: 212px; text-align: center; pointer-events: none; z-index: 5; color: rgba(200, 200, 200, .72); }
.wm-ar { font: 700 70px/88px "DejaVu Sans", sans-serif; white-space: nowrap; transform: scaleY(1.4); margin-bottom: 5px; }
.wm-en { font: 500 31px/34px "Inter", "Open Sans", sans-serif; letter-spacing: 1px; white-space: nowrap; }
</style>
